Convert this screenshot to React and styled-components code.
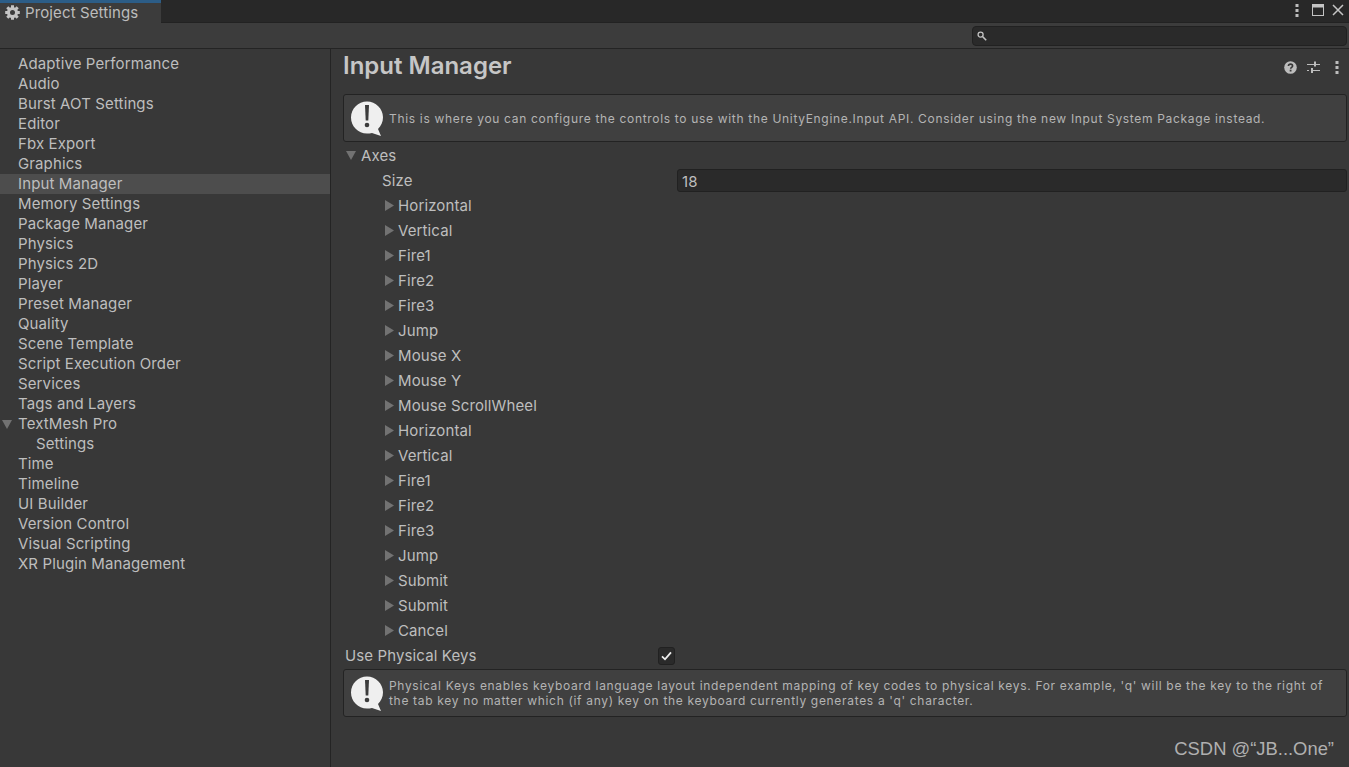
import React from 'react'
import styled, { createGlobalStyle } from 'styled-components'

const GlobalStyle = createGlobalStyle`
  html, body {
    margin: 0;
    padding: 0;
    height: 100%;
    background: #383838;
    overflow: hidden;
  }
  * { box-sizing: border-box; }
`

const Window = styled.div`
  position: relative;
  width: 1349px;
  height: 767px;
  display: flex;
  flex-direction: column;
  background: #383838;
  color: #bebebe;
  font-family: Inter, "Liberation Sans", sans-serif;
  font-size: 15px;
  letter-spacing: 0.12px;
  overflow: hidden;
`

const TitleBar = styled.div`
  height: 23px;
  flex: none;
  display: flex;
  justify-content: space-between;
  background: #282828;
  border-bottom: 1px solid #222;
`

const Tab = styled.div`
  width: 161px;
  height: 23px;
  display: flex;
  align-items: center;
  gap: 5px;
  padding: 0 0 1px 5px;
  background: #3c3c3c;
  border-top: 3px solid #2c5d87;
  color: #bdbdbd;
`

const WindowButtons = styled.div`
  display: flex;
  align-items: center;
  padding-right: 5px;
  height: 20px;
`

const WindowButton = styled.span`
  display: flex;
  margin-left: ${({ $gap }) => $gap}px;
`

const Toolbar = styled.div`
  height: 26px;
  flex: none;
  display: flex;
  justify-content: flex-end;
  align-items: center;
  padding-right: 2px;
  background: #3c3c3c;
  border-bottom: 1px solid #242424;
`

const Search = styled.div`
  width: 375px;
  height: 20px;
  display: flex;
  align-items: center;
  padding-left: 4px;
  background: #2a2a2a;
  border: 1px solid #212121;
  border-radius: 4px;
`

const Body = styled.div`
  flex: 1;
  display: flex;
  min-height: 0;
`

const Sidebar = styled.nav`
  width: 331px;
  flex: none;
  padding-top: 5px;
  border-right: 1px solid #242424;
`

const NavRow = styled.div`
  position: relative;
  height: 20px;
  line-height: 20px;
  padding-left: ${({ $sub }) => ($sub ? 36 : 18)}px;
  background: ${({ $selected }) => ($selected ? '#4d4d4d' : 'transparent')};
  white-space: nowrap;
`

const NavCaret = styled.span`
  position: absolute;
  left: 2px;
  top: 6px;
  display: flex;
`

const Content = styled.main`
  flex: 1;
  min-width: 0;
  padding: 0 2px 0 12px;
`

const Header = styled.div`
  height: 45px;
  display: flex;
  justify-content: space-between;
  align-items: flex-start;
`

const Heading = styled.h1`
  margin: 0;
  padding-top: 2px;
  font-size: 24px;
  line-height: 30px;
  font-weight: 600;
  letter-spacing: 0;
  color: #c6c6c6;
`

const HeaderIcons = styled.div`
  display: flex;
  align-items: center;
  height: 20px;
  margin: 8px -1px 0 0;
`

const IconSlot = styled.span`
  width: 23px;
  display: flex;
  justify-content: center;
`

const HelpBox = styled.div`
  display: flex;
  align-items: center;
  gap: 5px;
  height: 48px;
  margin-top: ${({ $top }) => $top || 0}px;
  padding-left: 7px;
  background: #404040;
  border: 1px solid #232323;
  border-radius: 3px;
  color: #b4b4b4;
  font-size: 12px;
  line-height: 15px;
  letter-spacing: 0.68px;
`

const HelpText = styled.div`
  white-space: pre;
`

const AxesRow = styled.div`
  height: 27px;
  display: flex;
  align-items: center;
  gap: 5px;
  padding-left: 3px;
`

const SizeRow = styled.div`
  height: 24px;
  display: flex;
  align-items: flex-start;
  justify-content: space-between;
  padding-left: 39px;
  line-height: 23px;
`

const SizeInput = styled.div`
  width: 670px;
  height: 23px;
  padding-left: 4px;
  line-height: 23px;
  background: #2a2a2a;
  border: 1px solid #212121;
  border-radius: 3px;
`

const AxisRow = styled.div`
  height: 25px;
  display: flex;
  align-items: center;
  gap: 4px;
  padding-left: 42px;
`

const ToggleRow = styled.div`
  height: 25px;
  display: flex;
  align-items: center;
  padding-left: 2px;
`

const ToggleLabel = styled.span`
  width: 313px;
`

const Checkbox = styled.span`
  width: 17px;
  height: 18px;
  display: flex;
  align-items: center;
  justify-content: center;
  background: #2a2a2a;
  border: 1px solid #212121;
  border-radius: 3px;
`

const Watermark = styled.div`
  position: absolute;
  right: 15px;
  top: 738px;
  font-family: "Liberation Sans", Arial, sans-serif;
  font-size: 18.4px;
  line-height: 22px;
  letter-spacing: 0;
  color: #b0b0b0;
`

const CaretOpen = () => (
  <svg width="10" height="9" viewBox="0 0 10 9">
    <path d="M0 0H10L5 9Z" fill="#727272" />
  </svg>
)

const CaretClosed = () => (
  <svg width="9" height="11" viewBox="0 0 9 11">
    <path d="M0 0L9 5.5L0 11Z" fill="#727272" />
  </svg>
)

const Dots = () => (
  <svg width="4" height="13" viewBox="0 0 4 13">
    <g fill="#bdbdbd">
      <rect x="0.5" width="3" height="3" />
      <rect x="0.5" y="5" width="3" height="3" />
      <rect x="0.5" y="10" width="3" height="3" />
    </g>
  </svg>
)

const Gear = () => (
  <svg width="15" height="15" viewBox="0 0 15 15">
    <circle cx="7.5" cy="7.5" r="4" fill="none" stroke="#c4c4c4" strokeWidth="3" />
    <g stroke="#c4c4c4" strokeWidth="3">
      <path d="M7.5 0.2V3.5M7.5 11.5V14.8" />
      <path d="M0.2 7.5H3.5M11.5 7.5H14.8" />
      <path d="M2.3 2.3L4.6 4.6M10.4 10.4L12.7 12.7" />
      <path d="M12.7 2.3L10.4 4.6M4.6 10.4L2.3 12.7" />
    </g>
  </svg>
)

const Maximize = () => (
  <svg width="12" height="12" viewBox="0 0 12 12">
    <rect x="0.5" y="0.5" width="11" height="11" fill="none" stroke="#c4c4c4" />
    <rect x="0.5" y="0.5" width="11" height="3" fill="#c4c4c4" />
  </svg>
)

const Close = () => (
  <svg width="12" height="12" viewBox="0 0 12 12">
    <path d="M1 1L11 11M11 1L1 11" stroke="#c4c4c4" strokeWidth="1.5" />
  </svg>
)

const SearchIcon = () => (
  <svg width="10" height="10" viewBox="0 0 10 10">
    <circle cx="3.6" cy="3.6" r="2.5" fill="none" stroke="#c4c4c4" strokeWidth="1.3" />
    <path d="M5.5 5.5L9.2 9.2" stroke="#c4c4c4" strokeWidth="1.6" />
  </svg>
)

const HelpIcon = () => (
  <svg width="13" height="13" viewBox="0 0 13 13">
    <circle cx="6.5" cy="6.5" r="6.3" fill="#bdbdbd" />
    <path d="M4.4 5C4.5 3.7 5.4 3.1 6.5 3.1C7.7 3.1 8.6 3.8 8.6 4.9C8.6 6.3 6.6 6.3 6.6 7.8" fill="none" stroke="#383838" strokeWidth="1.6" />
    <rect x="5.7" y="8.7" width="1.8" height="1.8" fill="#383838" />
  </svg>
)

const PresetIcon = () => (
  <svg width="13" height="13" viewBox="0 0 13 13">
    <g fill="#bdbdbd">
      <rect x="0" y="3" width="7" height="1" />
      <rect x="7" y="0.5" width="2" height="5" />
      <rect x="9" y="3" width="4" height="1" />
      <rect x="0" y="9" width="2" height="1" />
      <rect x="4" y="7" width="2" height="5" />
      <rect x="6" y="9" width="7" height="1" />
    </g>
  </svg>
)

const InfoIcon = () => (
  <svg width="33" height="35" viewBox="0 0 33 35" style={{ flex: 'none' }}>
    <path d="M16 0.5C24.8 0.5 32 7.6 32 16.3C32 21 30 25 27 28L30 35L21 32C19.5 32.4 17.8 32.6 16 32.6C7.2 32.6 0 25.3 0 16.5C0 7.7 7.2 0.5 16 0.5Z" fill="#efefef" />
    <path d="M14 4H18L17.3 19.5H14.7Z" fill="#3c3c3c" />
    <circle cx="16" cy="24" r="2.3" fill="#3c3c3c" />
  </svg>
)

const CheckIcon = () => (
  <svg width="11" height="10" viewBox="0 0 11 10">
    <path d="M1 5.3L4 8.3L10 1.3" fill="none" stroke="#eee" strokeWidth="1.8" />
  </svg>
)

const navItems = [
  { label: 'Adaptive Performance' },
  { label: 'Audio' },
  { label: 'Burst AOT Settings' },
  { label: 'Editor' },
  { label: 'Fbx Export' },
  { label: 'Graphics' },
  { label: 'Input Manager', selected: true },
  { label: 'Memory Settings' },
  { label: 'Package Manager' },
  { label: 'Physics' },
  { label: 'Physics 2D' },
  { label: 'Player' },
  { label: 'Preset Manager' },
  { label: 'Quality' },
  { label: 'Scene Template' },
  { label: 'Script Execution Order' },
  { label: 'Services' },
  { label: 'Tags and Layers' },
  { label: 'TextMesh Pro', expanded: true },
  { label: 'Settings', sub: true },
  { label: 'Time' },
  { label: 'Timeline' },
  { label: 'UI Builder' },
  { label: 'Version Control' },
  { label: 'Visual Scripting' },
  { label: 'XR Plugin Management' },
]

const axes = [
  'Horizontal', 'Vertical', 'Fire1', 'Fire2', 'Fire3', 'Jump', 'Mouse X', 'Mouse Y', 'Mouse ScrollWheel',
  'Horizontal', 'Vertical', 'Fire1', 'Fire2', 'Fire3', 'Jump', 'Submit', 'Submit', 'Cancel',
]

export default function App() {
  return (
    <Window>
      <GlobalStyle />
      <TitleBar>
        <Tab>
          <Gear />
          Project Settings
        </Tab>
        <WindowButtons>
          <WindowButton $gap={0}><Dots /></WindowButton>
          <WindowButton $gap={13}><Maximize /></WindowButton>
          <WindowButton $gap={8}><Close /></WindowButton>
        </WindowButtons>
      </TitleBar>
      <Toolbar>
        <Search>
          <SearchIcon />
        </Search>
      </Toolbar>
      <Body>
        <Sidebar>
          {navItems.map((item) => (
            <NavRow key={item.label} $selected={item.selected} $sub={item.sub}>
              {item.expanded && (
                <NavCaret>
                  <CaretOpen />
                </NavCaret>
              )}
              {item.label}
            </NavRow>
          ))}
        </Sidebar>
        <Content>
          <Header>
            <Heading>Input Manager</Heading>
            <HeaderIcons>
              <IconSlot><HelpIcon /></IconSlot>
              <IconSlot><PresetIcon /></IconSlot>
              <IconSlot><Dots /></IconSlot>
            </HeaderIcons>
          </Header>
          <HelpBox>
            <InfoIcon />
            <HelpText>
              This is where you can configure the controls to use with the UnityEngine.Input API. Consider using the new Input System Package instead.
            </HelpText>
          </HelpBox>
          <AxesRow>
            <CaretOpen />
            Axes
          </AxesRow>
          <SizeRow>
            Size
            <SizeInput>18</SizeInput>
          </SizeRow>
          {axes.map((axis, index) => (
            <AxisRow key={index}>
              <CaretClosed />
              {axis}
            </AxisRow>
          ))}
          <ToggleRow>
            <ToggleLabel>Use Physical Keys</ToggleLabel>
            <Checkbox>
              <CheckIcon />
            </Checkbox>
          </ToggleRow>
          <HelpBox $top={1}>
            <InfoIcon />
            <HelpText>
              {"Physical Keys enables keyboard language layout independent mapping of key codes to physical keys. For example, 'q' will be the key to the right of\nthe tab key no matter which (if any) key on the keyboard currently generates a 'q' character."}
            </HelpText>
          </HelpBox>
        </Content>
      </Body>
      <Watermark>CSDN @“JB...One”</Watermark>
    </Window>
  )
}
